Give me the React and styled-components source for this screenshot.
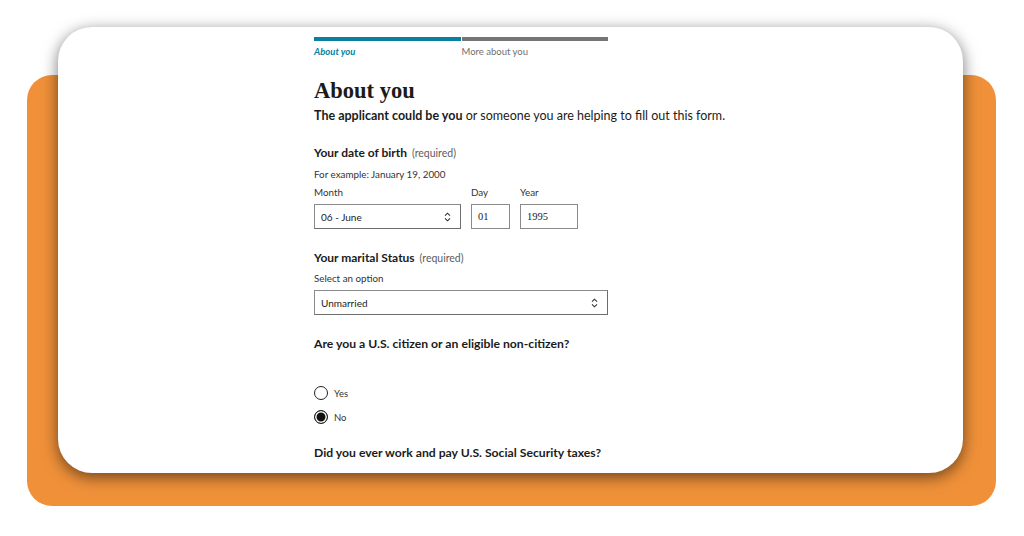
import React from 'react'
import styled, { createGlobalStyle } from 'styled-components'

const GlobalStyle = createGlobalStyle`
    html, body {
        margin: 0;
        padding: 0;
        background: #fff;
    }
    * {
        box-sizing: border-box;
    }
`

const sans = `Lato, "Open Sans", "Liberation Sans", sans-serif`

function Chevrons() {
    return (
        <svg width="7" height="10" viewBox="0 0 7 10" fill="none">
            <path d="M1 3.6 L3.5 1.2 L6 3.6" stroke="#333" strokeWidth="1.1" />
            <path d="M1 6.4 L3.5 8.8 L6 6.4" stroke="#333" strokeWidth="1.1" />
        </svg>
    )
}

function SelectBox({ width, value }) {
    return (
        <Select width={width}>
            <span>{value}</span>
            <Chevrons />
        </Select>
    )
}

function Radio({ label, checked }) {
    return (
        <RadioRow>
            <RadioDot checked={checked} />
            <span>{label}</span>
        </RadioRow>
    )
}

function App() {
    return (
        <>
            <GlobalStyle />
            <Stage>
                <Backdrop />
                <Card>
                    <Form>
                        <Steps>
                            <Step active>
                                <StepBar active />
                                <StepLabel active>About you</StepLabel>
                            </Step>
                            <Step>
                                <StepBar />
                                <StepLabel>More about you</StepLabel>
                            </Step>
                        </Steps>

                        <Title>About you</Title>
                        <Lead><strong>The applicant could be you</strong> or someone you are helping to fill out this form.</Lead>

                        <Legend>Your date of birth <Required>(required)</Required></Legend>
                        <Hint>For example: January 19, 2000</Hint>
                        <DateRow>
                            <Field>
                                <SmallLabel>Month</SmallLabel>
                                <SelectBox width={147} value="06 - June" />
                            </Field>
                            <Field>
                                <SmallLabel>Day</SmallLabel>
                                <TextBox width={39}>01</TextBox>
                            </Field>
                            <Field>
                                <SmallLabel>Year</SmallLabel>
                                <TextBox width={58}>1995</TextBox>
                            </Field>
                        </DateRow>

                        <Legend>Your marital Status <Required>(required)</Required></Legend>
                        <Hint gap={5}>Select an option</Hint>
                        <Field>
                            <SelectBox width={294} value="Unmarried" />
                        </Field>

                        <Question>Are you a U.S. citizen or an eligible non-citizen?</Question>
                        <Radios>
                            <Radio label="Yes" />
                            <Radio label="No" checked />
                        </Radios>

                        <Question gap={20}>Did you ever work and pay U.S. Social Security taxes?</Question>
                    </Form>
                </Card>
            </Stage>
        </>
    )
}

export default App

const Stage = styled.div`
    width: 1024px;
    height: 536px;
    display: grid;
    grid-template: 1fr / 1fr;
    overflow: hidden;
`

const Backdrop = styled.div`
    grid-area: 1 / 1;
    margin: 75px 28px 30px 27px;
    background: #f0913a;
    border-radius: 25px;
`

const Card = styled.div`
    grid-area: 1 / 1;
    margin: 27px 61px 63px 58px;
    background: #fff;
    border-radius: 34px;
    box-shadow: 0 4px 16px rgba(0, 0, 0, 0.55);
    overflow: hidden;
    padding: 10px 0 0 256px;
`

const Form = styled.div`
    width: 294px;
    display: flex;
    flex-direction: column;
    font-family: ${sans};
    color: #1b1b1b;
`

const Steps = styled.div`
    display: flex;
    gap: 1px;
`

const Step = styled.div`
    width: 147px;
    display: flex;
    flex-direction: column;
`

const StepBar = styled.div`
    height: 4px;
    background: ${({ active }) => active ? '#0b7fa0' : '#757575'};
`

const StepLabel = styled.div`
    margin-top: 5px;
    height: 12px;
    line-height: 12px;
    font-size: 9.5px;
    font-weight: ${({ active }) => active ? 700 : 400};
    font-style: ${({ active }) => active ? 'italic' : 'normal'};
    color: ${({ active }) => active ? '#0b7fa0' : '#6f6f6f'};
`

const Title = styled.h1`
    margin: 19px 0 0;
    height: 28px;
    line-height: 28px;
    font-family: "Liberation Serif", "DejaVu Serif", serif;
    font-size: 22.5px;
    font-weight: 700;
    color: #1b1b1b;
`

const Lead = styled.p`
    margin: 3px 0 0;
    height: 16px;
    line-height: 16px;
    font-size: 12.5px;
    white-space: nowrap;

    strong {
        font-weight: 700;
    }
`

const Legend = styled.div`
    margin-top: 21px;
    height: 16px;
    line-height: 16px;
    font-size: 12px;
    font-weight: 700;
`

const Required = styled.span`
    margin-left: 2px;
    font-size: 10.5px;
    font-weight: 400;
    color: #5c5c5c;
`

const Hint = styled.div`
    margin-top: ${({ gap }) => gap ?? 6}px;
    height: 14px;
    line-height: 14px;
    font-size: 9.8px;
    color: #333;
`

const DateRow = styled.div`
    margin-top: 4px;
    display: flex;
    gap: 10px;
`

const Field = styled.div`
    display: flex;
    flex-direction: column;
    margin-top: 5px;
`

const SmallLabel = styled.div`
    height: 14px;
    line-height: 14px;
    font-size: 9.8px;
    color: #333;
    margin-bottom: 5px;
    margin-top: -5px;
`

const Select = styled.div`
    width: ${({ width }) => width}px;
    height: 25px;
    border: 1px solid #8a8a8a;
    border-right-color: #6d6d6d;
    border-bottom-color: #6d6d6d;
    background: #fff;
    display: flex;
    align-items: center;
    justify-content: space-between;
    padding: 0 9px 0 6px;
    font-size: 10px;
    color: #1b1b1b;
`

const TextBox = styled.div`
    width: ${({ width }) => width}px;
    height: 25px;
    border: 1px solid #8a8a8a;
    display: flex;
    align-items: center;
    padding-left: 6px;
    font-family: "Liberation Serif", serif;
    font-size: 10.5px;
    color: #1b1b1b;
`

const Question = styled.div`
    margin-top: ${({ gap }) => gap ?? 21}px;
    height: 16px;
    line-height: 16px;
    font-size: 12.2px;
    font-weight: 700;
    white-space: nowrap;
`

const Radios = styled.div`
    margin-top: 33px;
    display: flex;
    flex-direction: column;
    gap: 8px;
`

const RadioRow = styled.div`
    height: 16px;
    display: flex;
    align-items: center;
    gap: 6px;
    font-size: 9.5px;
    color: #333;
`

const RadioDot = styled.span`
    width: 14px;
    height: 14px;
    border-radius: 50%;
    border: 1.5px solid #222;
    background: ${({ checked }) => checked ? '#111' : '#fff'};
    box-shadow: ${({ checked }) => checked ? 'inset 0 0 0 1.5px #fff' : 'none'};
`
